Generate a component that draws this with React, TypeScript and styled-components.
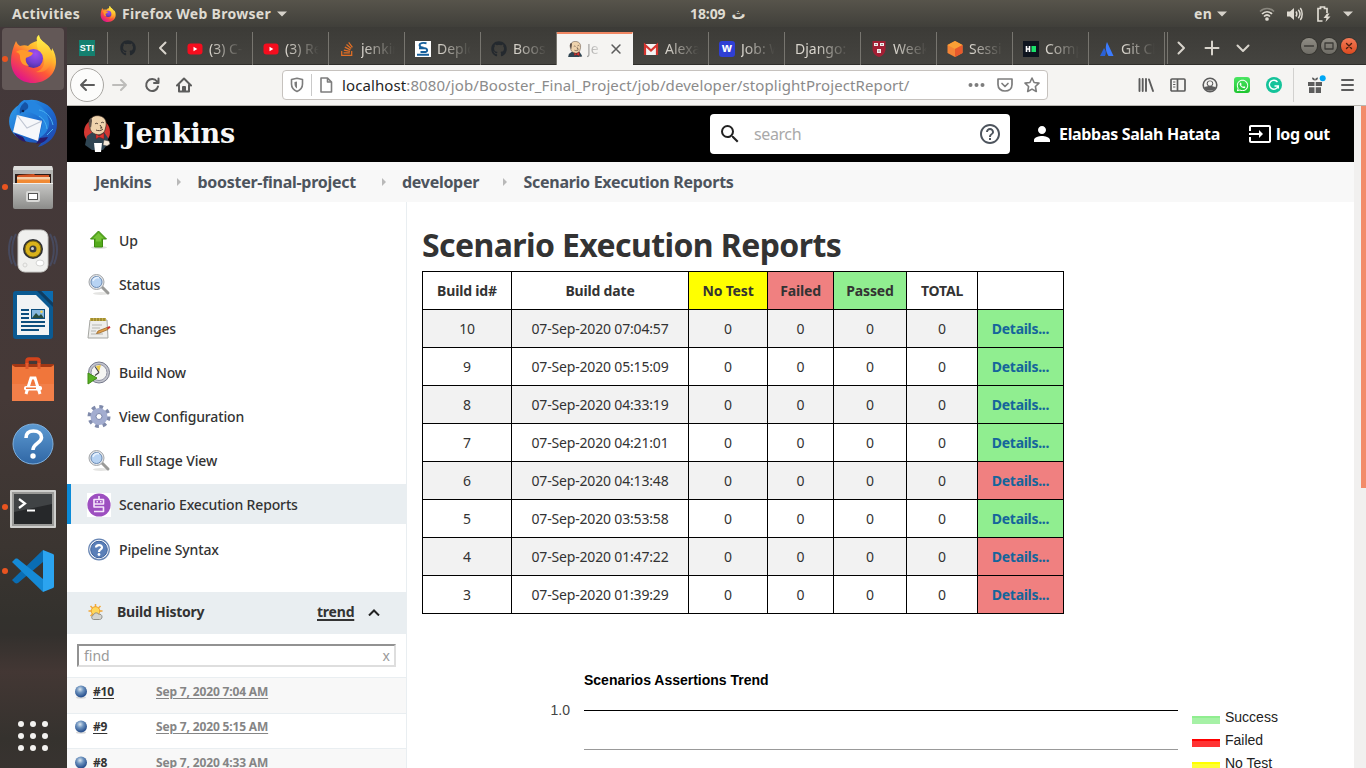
import React from 'react';
import styled, { createGlobalStyle, css } from 'styled-components';
import { FaGithub, FaStackOverflow, FaWhatsapp } from 'react-icons/fa';
import { MdSearch, MdHelpOutline, MdPerson, MdInput } from 'react-icons/md';

const sans = '"Noto Sans", "Open Sans", sans-serif';

const GlobalStyle = createGlobalStyle`
  * { box-sizing: border-box; }
  body { margin: 0; overflow: hidden; font-family: ${sans}; font-size: 14px; color: #333; }
  svg { display: block; flex: none; }
`;

/* ---------- desktop frame ---------- */
const Desktop = styled.div`
  display: flex; flex-direction: column; width: 1366px; height: 768px; overflow: hidden; background: #fff;
`;
const TopBar = styled.header`
  display: flex; align-items: center; flex: none; height: 27px; padding: 0 0 0 12px;
  background: linear-gradient(#57544b, #403f3a);
  color: #dfdbd2; font-weight: 700; font-size: 14px; letter-spacing: 0.3px; white-space: nowrap;
`;
const Activities = styled.span`width: 88px;`;
const AppMenu = styled.div`
  display: flex; align-items: center; width: 590px; gap: 6px;
`;
const Clock = styled.div`
  display: flex; width: 504px; gap: 6px; align-items: center; letter-spacing: -0.1px;
`;
const ClockDay = styled.span`font-family: "DejaVu Sans", sans-serif; font-size: 14px;`;
const Lang = styled.span`width: 23px;`;
const Tray = styled.div`display: flex; align-items: center; gap: 12px; margin-left: 32px;`;

const Body = styled.div`display: flex; flex: 1; min-height: 0;`;
const Dock = styled.nav`
  display: flex; flex-direction: column; flex: none; width: 67px;
  background: linear-gradient(#43383a 0, #453937 50%, #3b3531 70%, #33312d 80%, #33302d 82%, #433734 87%, #35322e 96%, #383330 100%);
`;
const DockItem = styled.div<{ $active?: boolean; $running?: boolean; $drop?: number }>`
  position: relative; display: flex; align-items: center; justify-content: center;
  height: 62px; margin: 1px 3px 1px 2px; padding-top: ${p => p.$drop ?? 0}px; border-radius: 4px;
  background: ${p => (p.$active ? '#635857' : 'transparent')};
  ${p => p.$running && css`
    &::before { content: ''; position: absolute; left: 0; top: 28px; width: 6px; height: 6px; border-radius: 50%; background: #e95420; }
  `}
`;
const AppGrid = styled.div`
  display: grid; grid-template-columns: repeat(3, 6px); gap: 6px; margin: auto 0 17px 18px;
`;
const Dot = styled.i`width: 6px; height: 6px; border-radius: 50%; background: #f3f2f0;`;

/* ---------- browser ---------- */
const Browser = styled.main`display: flex; flex-direction: column; width: 1299px;`;
const TabBar = styled.div`
  display: flex; flex: none; height: 38px; padding-top: 5px; border-bottom: 1px solid #2f2e2b;
  background: linear-gradient(#3c3b37, #454440); color: #d8d4cc;
`;
const tabEdge = css`border-right: 1px solid #77756f;`;
const PinnedTab = styled.div<{ $w: number }>`
  display: flex; align-items: center; justify-content: center; width: ${p => p.$w}px; ${tabEdge}
`;
const Tab = styled.div<{ $active?: boolean }>`
  display: flex; align-items: center; flex: none; gap: 6px; width: 76px; height: 33px; padding-left: 10px;
  ${tabEdge}
  ${p => p.$active && css`
    gap: 4px; background: #f5f4f2; color: #5c5c5c; border-top: 2px solid #f08763; border-right-color: #f5f4f2; padding-bottom: 2px;
  `}
`;
const TabTitle = styled.span<{ $w: number }>`
  width: ${p => p.$w}px; line-height: 20px; white-space: nowrap;
  mask-image: linear-gradient(90deg, #000 ${p => p.$w - 32}px, transparent ${p => p.$w}px);
`;
const TabTools = styled.div`
  display: flex; align-items: center; width: 98px; margin-left: 2px; padding-left: 5px; gap: 15px; border-left: 1px solid #77756f;
`;
const WindowButtons = styled.div`display: flex; gap: 4px; margin: 6px 0 0 36px;`;
const WindowButton = styled.div<{ $close?: boolean }>`
  display: flex; align-items: center; justify-content: center; width: 16px; height: 16px; border-radius: 50%;
  background: ${p => (p.$close ? 'linear-gradient(#f47b57, #dd4a1f)' : 'linear-gradient(#8f8c84, #6f6d66)')};
  box-shadow: 0 0 0 1px #35342f;
`;
const StBadge = styled.div`
  width: 16px; height: 16px; background: #14806f; color: #fff; font: 700 9px/16px "Liberation Sans", sans-serif; text-align: center;
`;
const WorkBadge = styled.div`
  width: 16px; height: 16px; border-radius: 3px; background: #2f3fd4; color: #fff; font: 700 12px/14px "Noto Sans", sans-serif; text-align: center;
`;

const Toolbar = styled.div`
  display: flex; align-items: center; flex: none; height: 41px; padding: 0 0 0 3px;
  background: #f5f4f2; border-bottom: 1px solid #b9b7b2; color: #5c5c5c;
`;
const BackButton = styled.div`
  display: flex; align-items: center; justify-content: center; width: 34px; height: 34px; margin-right: 8px;
  border: 1px solid #a8a6a2; border-radius: 50%; background: #fcfcfb;
`;
const NavSlot = styled.div<{ $ml?: number }>`display: flex; justify-content: center; width: 32px; margin-left: ${p => p.$ml ?? 0}px;`;
const AddressBar = styled.div`
  display: flex; align-items: center; width: 766px; height: 30px; margin-left: 82px; padding: 0 6px;
  border: 1px solid #c6c2be; border-radius: 4px; background: #fff; color: #7d7d7d;
`;
const AddressDivider = styled.i`width: 1px; height: 22px; margin: 0 6px 0 6px; background: #c9c9c9;`;
const Url = styled.div`
  flex: 1; margin-left: 8px; color: #8b8b8b; font-size: 15px; letter-spacing: 0.1px; line-height: 20px; white-space: nowrap;
`;
const Host = styled.span`color: #1f1f1f;`;
const AddressActions = styled.div`display: flex; align-items: center; gap: 11.500px; margin-right: 1px;`;
const ToolbarActions = styled.div`display: flex; align-items: center; gap: 16px; margin-left: 90px;`;
const ToolbarMenu = styled.div`
  display: flex; align-items: center; gap: 14px; height: 34px; margin-left: 11px; padding-left: 13px; border-left: 1px solid #d2d1cf;
`;
const WhatsApp = styled.div`
  display: flex; align-items: center; justify-content: center; width: 16px; height: 16px; border-radius: 3px;
  background: linear-gradient(#4be663, #1ec52f); color: #fff;
`;

/* ---------- jenkins page ---------- */
const Viewport = styled.div`display: flex; flex: 1; min-height: 0;`;
const Page = styled.div`display: flex; flex-direction: column; width: 1287px; background: #fff;`;
const ScrollTrack = styled.div`width: 12px; background: #f1f0ef;`;
const ScrollThumb = styled.div`width: 5px; height: 382px; margin-left: 7px; background: #f28c6a;`;

const JenkinsHeader = styled.div`
  display: flex; align-items: center; flex: none; height: 56px; padding: 0 0 0 16px; background: #000; color: #fff;
`;
const Wordmark = styled.span`
  flex: none; width: 587px; margin-left: 12px; padding-bottom: 1px; font: 700 27px/40px "DejaVu Serif", serif; letter-spacing: -0.2px; color: #f7f7f7;
`;
const SearchBox = styled.div`
  display: flex; align-items: center; flex: none; width: 300px; height: 40px; padding: 0 8px 0 8px; border-radius: 4px;
  background: #fff; color: #a9a9a9; font-size: 16px; letter-spacing: -0.4px;
`;
const SearchText = styled.span`flex: 1; margin-left: 12px; padding-bottom: 1px;`;
const HeaderLink = styled.div<{ $gap: number; $ml: number }>`
  display: flex; align-items: center; gap: ${p => p.$gap}px; margin-left: ${p => p.$ml}px;
  font-size: 16px; font-weight: 700; letter-spacing: -0.33px; white-space: nowrap;
`;
const Breadcrumbs = styled.div`
  display: flex; align-items: center; flex: none; height: 40px; padding: 0 0 1px 28px; background: #f8f8f8;
  color: #4d545d; font-weight: 700; font-size: 16px; letter-spacing: -0.28px;
`;
const Crumb = styled.span<{ $w: number }>`width: ${p => p.$w}px; white-space: nowrap;`;
const CrumbArrow = styled.i`
  margin: 0 16.500px 0 24px; border: 4px solid transparent; border-left-color: #b9b9b9; border-right: 0;
`;

const Columns = styled.div`display: flex; flex: 1; min-height: 0;`;
const SidePanel = styled.aside`
  width: 340px; padding-top: 18px; border-right: 1px solid #e9eef1; overflow: hidden;
`;
const Task = styled.div<{ $selected?: boolean; $gap?: number }>`
  display: flex; align-items: center; gap: 8px; height: 40px; margin-bottom: ${p => p.$gap ?? 4}px; padding: 2px 0 0 16px;
  border-left: 4px solid ${p => (p.$selected ? '#0b8bd8' : 'transparent')};
  background: ${p => (p.$selected ? '#e9eef1' : 'transparent')};
  font-weight: 500; letter-spacing: -0.14px; line-height: 20px;
`;
const HistoryHeader = styled.div`
  display: flex; align-items: center; height: 42px; padding: 0 0 3px 20px; background: #e9eef1;
  font-weight: 700; letter-spacing: -0.22px; line-height: 19px;
`;
const HistoryTitle = styled.span`width: 200px; margin-left: 12px;`;
const TrendLink = styled.a`
  width: 51px; text-decoration: underline; text-decoration-thickness: 2px; text-underline-offset: 2px;
`;
const FindBox = styled.div`
  display: flex; justify-content: space-between; align-items: center; width: 319px; height: 23px; margin: 10px 0 10px 10px; padding: 0 4px 1px 5px;
  border: 2px solid; border-color: #929292 #dedede #dedede #929292; color: #9a9a9a;
`;
const BuildList = styled.div``;
const BuildRow = styled.div<{ $h: number; $top: number }>`
  display: flex; align-items: flex-start; height: ${p => p.$h}px; padding: ${p => p.$top}px 0 0 7px; border-top: 1px solid #e9eef1;
  font-size: 12px; font-weight: 700; line-height: 17px; letter-spacing: -0.16px;
  &:nth-child(odd) { background: #f8f8f8; }
  svg { margin-top: 2px; }
`;
const BuildNumber = styled.a`width: 63px; margin-left: 5px; text-decoration: underline; text-underline-offset: 2px;`;
const BuildTime = styled.a`color: #858585; text-decoration: underline; text-underline-offset: 2px;`;

const Main = styled.section`padding: 24px 0 0 15px;`;
const Title = styled.h1`margin: 0 0 8px; font-size: 32px; line-height: 37px; font-weight: 700; letter-spacing: -0.6px;`;
const Table = styled.table`
  width: 642px; table-layout: fixed; border-spacing: 0; border: solid #000; border-width: 1px 0 0 1px; text-align: center;
`;
const fills: Record<string, string> = { yellow: '#ffff00', red: '#f08080', green: '#90ee90' };
const Cell = styled.td<{ $fill?: string }>`
  height: 38px; padding: 0; border: solid #000; border-width: 0 1px 1px 0; letter-spacing: -0.17px; line-height: 20px;
  ${p => p.$fill && css`background: ${fills[p.$fill]};`}
`;
const HeadCell = styled(Cell)`font-weight: 700;`;
const Col = styled.col<{ $w: number }>`width: ${p => p.$w}px;`;
const BuildTr = styled.tr`&:nth-child(odd) { background: #f2f2f2; }`;
const DetailsLink = styled.a`color: #15659b; font-weight: 700; letter-spacing: -0.3px;`;

const Chart = styled.div`
  display: grid; grid-template-columns: 148px 594px 1fr; column-gap: 14px; margin-top: 57px;
  font-family: "Liberation Sans", sans-serif;
`;
const ChartTitle = styled.div`grid-column: 2 / 4; height: 30px; font-weight: 700; line-height: 18px; color: #000;`;
const AxisLabel = styled.div`text-align: right; line-height: 18px; color: #444;`;
const Plot = styled.div`
  height: 40px; margin-top: 9px; border-top: 1px solid #000; border-bottom: 1px solid #999;
`;
const Legend = styled.div`display: flex; flex-direction: column; gap: 5px; padding-top: 7px; color: #222;`;
const LegendItem = styled.div`display: flex; align-items: center; gap: 5px; height: 18px;`;
const Swatch = styled.i<{ $line: string; $area: string }>`
  width: 28px; height: 8px; margin-top: 6px; border-top: 2px solid ${p => p.$line}; background: ${p => p.$area};
`;

/* ---------- drawings ---------- */
const FirefoxIcon = ({ size }: { size: number }) => (
  <svg width={size} height={size} viewBox="0 0 48 48">
    <defs>
      <linearGradient id="ffBody" x1="0.8" y1="0.1" x2="0.25" y2="0.95">
        <stop offset="0" stopColor="#fff24a" /><stop offset="0.3" stopColor="#ffb52c" /><stop offset="0.6" stopColor="#ff5a36" /><stop offset="1" stopColor="#e0158a" />
      </linearGradient>
      <radialGradient id="ffGlobe" cx="0.6" cy="0.25" r="0.8">
        <stop offset="0" stopColor="#a04df0" /><stop offset="0.6" stopColor="#7440d0" /><stop offset="1" stopColor="#4a2fa0" />
      </radialGradient>
      <linearGradient id="ffTail" x1="0" y1="0" x2="0" y2="1">
        <stop offset="0" stopColor="#fff44f" /><stop offset="0.6" stopColor="#ffc02e" /><stop offset="1" stopColor="#ff7a30" />
      </linearGradient>
    </defs>
    <path d="M7 6c1 2 2 4 4 5 3-1 6-1 8 0 3-3 6-4 9-5-1-3 0-5 2-6 0 5 7 8 10 12 1 2 2 3 2 4 1-1 1-2 1-3 3 5 4 9 4 14 0 12-10 21-23 21S2 39 2 26c0-7 2-14 5-20z" fill="url(#ffBody)" />
    <path d="M30 0c0 5 7 8 10 12 5 7 4 15 0 20-4 5-9 6-13 5 7-2 9-8 8-13-2-6-7-8-7-14 0-4 0-8 2-10z" fill="url(#ffTail)" />
    <circle cx="24.500" cy="23.500" r="9.500" fill="url(#ffGlobe)" />
    <path d="M7 17c4-3 8-2 11-1 2 1 5 1 6 2-1 3-5 4-7 5-1 3 1 6 3 8-6 0-9-4-9-9 0-3-1-4-4-5z" fill="#ff9a2b" />
  </svg>
);

const ThunderbirdIcon = () => (
  <svg width="48" height="48" viewBox="0 0 48 48">
    <defs><linearGradient id="tb" x1="0" y1="0" x2="1" y2="1"><stop offset="0" stopColor="#35a4ec" /><stop offset="0.5" stopColor="#1d6fd2" /><stop offset="1" stopColor="#1f3fa8" /></linearGradient></defs>
    <path d="M14 4c3-4 12-4 18-1 10 3 16 12 16 22 0 12-8 20-19 23l4-5c-8 2-22 0-29-9C-2 26-1 15 6 9c2-2 5-4 8-5z" fill="url(#tb)" />
    <path d="M5 34c3 5 7 8 12 9l-3-5zM27 45c7-1 10-3 12-7l-8 1z" fill="#2a1a6b" />
    <path d="M8 16l25 6-4 20L4 33z" fill="#f6f7fa" />
    <path d="M8 16l10 13 15-7" fill="none" stroke="#c0c6d2" strokeWidth="1.200" />
    <path d="M15 1C8 5 7 11 8 16c3-3 6-4 9-3 6 0 11 3 17 8l-4 18c8-4 12-12 9-20C36 8 26 1 15 1z" fill="#2585e0" />
    <path d="M16 3c-4 3-6 7-5 12 2-3 6-3 8-6 1-3-1-5-3-6z" fill="#1553a5" />
    <circle cx="14" cy="12" r="1.300" fill="#0a2350" />
    <path d="M30 11c6 1 12 6 14 15M30 17c5 3 7 7 8 13M38 36l6-6" stroke="#49b0f0" strokeWidth="1" fill="none" />
  </svg>
);

const FilesIcon = () => (
  <svg width="44" height="44" viewBox="0 0 44 44">
    <defs><linearGradient id="cab" x1="0" y1="0" x2="0" y2="1"><stop offset="0" stopColor="#c8c8c6" /><stop offset="1" stopColor="#8c8c8a" /></linearGradient></defs>
    <path d="M3 1h38l1 3v38H2V4z" fill="#b4b4b2" /><path d="M3 1h38l1 4H2z" fill="#dededc" />
    <path d="M4 9h36v10H4z" fill="#2b1d1a" /><path d="M8 10l15-1 1 1h14v8H6v-7z" fill="#d35422" />
    <path d="M6 12h33v3H6z" fill="#f4cda8" /><path d="M6 14.500h33V19H6z" fill="#f08a34" />
    <path d="M2 18h40v24a2 2 0 0 1-2 2H4a2 2 0 0 1-2-2z" fill="url(#cab)" /><path d="M2 18h40v1H2z" fill="#efefed" />
    <rect x="15" y="26" width="14" height="11" rx="2" fill="#d9d9d7" /><rect x="17.500" y="28.500" width="9" height="6" fill="#fff" stroke="#555" />
  </svg>
);

const SpeakerIcon = () => (
  <svg width="50" height="46" viewBox="0 0 50 46">
    <g fill="none" stroke="#4d6ba3" strokeWidth="2" opacity="0.35"><path d="M8 6c-5 9-5 23 0 32M42 6c5 9 5 23 0 32M4 8c-4 8-4 19 0 28M46 8c4 8 4 19 0 28" /></g>
    <rect x="10" y="2" width="30" height="42" rx="7" fill="#f0f0ee" stroke="#c9c9c6" />
    <circle cx="25" cy="21" r="10" fill="#2f3033" /><circle cx="25" cy="21" r="8" fill="#d9b21c" stroke="#806a10" />
    <circle cx="25" cy="21" r="3.500" fill="#3a3b3d" /><circle cx="24.500" cy="20.500" r="1.500" fill="#d0d4da" />
    <ellipse cx="32" cy="35" rx="4" ry="3" fill="#fff" stroke="#d4d4d2" /><circle cx="17" cy="37" r="2" fill="none" stroke="#d4d4d2" />
  </svg>
);

const WriterIcon = () => (
  <svg width="40" height="48" viewBox="0 0 40 48">
    <path d="M3 0h24l13 13v32a3 3 0 0 1-3 3H3a3 3 0 0 1-3-3V3a3 3 0 0 1 3-3z" fill="#0b5a92" />
    <path d="M4 4h19l13 13v27H4z" fill="#f1f3f4" /><path d="M28 0h12v12z" fill="#0c6cb0" /><path d="M24 0h4l12 12v4z" fill="#0d3d63" />
    <g fill="#0d4e7d"><path d="M8 18h8v2H8zM8 22h8v2H8zM8 26h8v2H8zM8 30h24v2H8zM8 34h24v2H8zM8 38h18v2H8z" /><path d="M18 18h14v10H18z" /></g>
    <path d="M19 19h12v8H19z" fill="#87b8de" /><path d="M19 27l4-5 3 3 2-2 3 4z" fill="#284c3c" /><circle cx="28.500" cy="20.800" r="1.200" fill="#f7d24a" />
  </svg>
);

const SoftwareIcon = () => (
  <svg width="42" height="46" viewBox="0 0 42 46">
    <path d="M15 15V5a2 2 0 0 1 2-2h8a2 2 0 0 1 2 2v10" fill="none" stroke="#d3431b" strokeWidth="3.500" />
    <path d="M0 8h42l-1 5H1z" fill="#a13715" /><path d="M0 9l3 2h36l3-2v36H0z" fill="#f0763b" /><path d="M0 45V28h42v17z" fill="#f28350" opacity="0.7" />
    <path d="M15 13V7M27 13V7" stroke="#e2592d" strokeWidth="3" />
    <path d="M14 38l5-16h4l5 16" fill="none" stroke="#fff" strokeWidth="3" /><rect x="12" y="30" width="18" height="4.500" rx="2" fill="#fff" /><path d="M14 31.500h10v1.500H14z" fill="#f0763b" />
  </svg>
);

const HelpDockIcon = () => (
  <svg width="42" height="42" viewBox="0 0 42 42">
    <defs><linearGradient id="hp" x1="0" y1="0" x2="0" y2="1"><stop offset="0" stopColor="#5d9ad2" /><stop offset="1" stopColor="#3067a5" /></linearGradient></defs>
    <circle cx="21" cy="21" r="20" fill="url(#hp)" stroke="#7fb0dd" />
    <path d="M14 15c0-5 3-7 7.500-7 5 0 8 3 8 6.500C29.500 20 21 20.500 21 27" fill="none" stroke="#fff" strokeWidth="3.600" /><circle cx="21" cy="33" r="2.700" fill="#fff" />
  </svg>
);

const TerminalIcon = () => (
  <svg width="46" height="38" viewBox="0 0 46 38">
    <rect width="46" height="38" rx="1" fill="#cfcfcd" /><rect x="2" y="2" width="42" height="34" fill="#9a9a98" />
    <rect x="4" y="4" width="38" height="30" fill="#26282a" /><path d="M4 4h38v10L4 22z" fill="#404345" />
    <path d="M9 9l6 4.500L9 18M17 20.500h8" fill="none" stroke="#fff" strokeWidth="2.200" />
  </svg>
);

const CodeIcon = () => (
  <svg width="42" height="42" viewBox="0 0 42 42">
    <path d="M0 30l3 3c1 .6 2 .6 3 0l25-21V0z" fill="#0a6db3" /><path d="M0 12l3-3c1-.6 2-.6 3 0l25 20v13z" fill="#158ad6" />
    <path d="M31 0l10 4c.7.300 1 1 1 2v30c0 1-.3 1.700-1 2l-10 4z" fill="#2ba4f0" />
  </svg>
);

const Butler = ({ w, h, box = '0 0 28 38', ring }: { w: number; h: number; box?: string; ring?: boolean }) => (
  <svg width={w} height={h} viewBox={box}>
    {ring && <circle cx="14" cy="17" r="13" fill="#d33833" />}
    <path d="M4 21l7-5 10 1 4 6-1 7-4 5H9L2 30z" fill="#2f4553" />
    <path d="M7 5c2-4 6-5 10-4 4 1 7 4 6 10l-1 4c-1 4-7 6-10 4-3-1-5-4-5-6-1-3-1-5 0-8z" fill="#efd3ad" stroke="#3c2c24" strokeWidth="0.700" />
    <path d="M6 5c2-3 3-2 3 1l-1 7c-2-2-3-5-2-8z" fill="#5d5049" />
    <path d="M12 9c1-1 2-1 3 0M18 8c1-1 2-1 3 0M13 15c2 1 5 1 7-1M17 10l2 3h-2" fill="none" stroke="#3c2c24" strokeWidth="0.900" />
    <path d="M13 19l3 2 5-3v6l-5-2-3 2z" fill="#e03733" stroke="#7e1715" strokeWidth="0.500" />
    <path d="M11 28h8l-1 9h-6z" fill="#fff" /><path d="M21 25l5 1 1 3-3 2-4-1z" fill="#f5e9d9" stroke="#444" strokeWidth="0.500" />
  </svg>
);

const Caret = () => <svg width="10" height="6" viewBox="0 0 10 6"><path d="M0 .5h10L5 5.500z" fill="#d6d2ca" /></svg>;

const YouTube = () => (
  <svg width="16" height="16" viewBox="0 0 16 16"><rect x="0.500" y="2.500" width="15" height="11" rx="3" fill="#f50d1e" /><path d="M6.500 5.800v4.400L10.300 8z" fill="#fff" /></svg>
);
const DeployIcon = () => (
  <svg width="16" height="16" viewBox="0 0 16 16"><path fill="#fff" d="M0 0h16v16H0z" /><path d="M11.500 2.200C8 1.500 4.500 2 4.500 4s2 2.500 4 2.800M4 7.200h6c2.500 0 3 3.300.5 3.800H5.500M2 13.800h12" fill="none" stroke="#17609c" strokeWidth="1.900" /></svg>
);
const GmailIcon = () => (
  <svg width="16" height="16" viewBox="0 0 16 16"><path d="M1 3h14v11H1z" fill="#f3f3f3" /><path d="M2 14V4l6 5.500L14 4v10" fill="none" stroke="#d5342f" strokeWidth="2.200" /></svg>
);
const ShieldIcon = () => (
  <svg width="16" height="16" viewBox="0 0 16 16"><path d="M1.500 0h13v8c0 4-3 7-6.500 8-3.500-1-6.500-4-6.500-8z" fill="#a31f34" /><path d="M3 2h4v3H3zM9 2h4v3H9zM6 8h4v4H6z" fill="#f4e9ea" /><path d="M4 3.500h2M10 3.500h2M7 10h2" stroke="#777" strokeWidth="0.800" /></svg>
);
const CubeIcon = () => (
  <svg width="16" height="16" viewBox="0 0 16 16"><path d="M8 0l7.500 4v8L8 16 .5 12V4z" fill="#f58536" /><path d="M8 0l7.500 4L8 8 .5 4z" fill="#fba035" /><path d="M15.500 4v8L8 16V8z" fill="#e9592c" /></svg>
);
const HackerIcon = () => (
  <svg width="16" height="16" viewBox="0 0 16 16"><path fill="#0e141e" d="M0 0h16v16H0z" /><path d="M3.500 5v6M6.500 5v6M3.500 8h3" stroke="#fff" strokeWidth="1.600" /><path d="M8.500 5H13v6H8.500z" fill="#1be26a" /></svg>
);
const AtlassianIcon = () => (
  <svg width="16" height="16" viewBox="0 0 16 16"><path d="M5 7c2 2 2.500 5 1 8H1z" fill="#2a61d8" /><path d="M8 1l6.500 14H9.500C6.500 10 6 6 8 1z" fill="#3b7bff" /></svg>
);

/* line icons share one stroke style */
const Line = ({ d, w = 16, sw = 2, color = 'currentColor', children }: { d: string; w?: number; sw?: number; color?: string; children?: React.ReactNode }) => (
  <svg width={w} height={w} viewBox="0 0 16 16" fill="none" stroke={color} strokeWidth={sw} strokeLinecap="round" strokeLinejoin="round"><path d={d} />{children}</svg>
);

const Magnifier = () => (
  <svg width="24" height="24" viewBox="0 0 24 24"><ellipse cx="14" cy="20.500" rx="8" ry="1.500" fill="#e4e4e2" /><path d="M15 14l6 6" stroke="#9a9a98" strokeWidth="3" strokeLinecap="round" /><circle cx="9.500" cy="9" r="7.500" fill="#e3e5e8" stroke="#a3a6aa" /><circle cx="9.500" cy="9" r="5.500" fill="#b7d3f3" stroke="#6d8db5" /><path d="M6 8c1-3 4-4 6-3" stroke="#e7f2ff" fill="none" strokeWidth="1.500" /></svg>
);
const UpIcon = () => (
  <svg width="24" height="24" viewBox="0 0 24 24"><ellipse cx="12" cy="18.500" rx="8" ry="1.500" fill="#dededc" /><path d="M11.500 2l8 8h-4v8h-8v-8h-4z" fill="#55ab1c" stroke="#3d8b10" /><path d="M11.500 4l5.500 5.500h-3v3H9v-3H6z" fill="#84cc44" opacity="0.7" /></svg>
);
const NotepadIcon = () => (
  <svg width="24" height="24" viewBox="0 0 24 24"><path d="M3 3h17l1 18H1z" fill="#eeeeec" stroke="#a5a6a2" /><path d="M3 1h16v3H3z" fill="#c6b04c" /><path d="M5 1v3M8 1v3M11 1v3M14 1v3M17 1v3" stroke="#7d6c1d" /><path d="M5 8h10M5 11h8M4 14h5M4 17h12" stroke="#b5b6b2" /><path d="M9.500 16.500l1.500-2.500 9-3.500 1 2L12.500 16z" fill="#e2a14c" stroke="#8f5b1d" strokeWidth="0.700" /><path d="M20 10.300L22.500 9l1 1.800-2.500 1.400z" fill="#cc2e2e" /></svg>
);
const ClockIcon = () => (
  <svg width="24" height="24" viewBox="0 0 24 24"><circle cx="12" cy="11.500" r="10.500" fill="#c3c5cd" stroke="#777a8c" /><circle cx="12" cy="11.500" r="8" fill="#f5f5f3" stroke="#8e90a2" /><path d="M12 11L9 5l5-1z" fill="#eccb4a" /><path d="M12 11.500l-4-6M12 11.500l-4 3" stroke="#444" strokeWidth="1.200" /><path d="M1 12l9 5-9 6z" fill="#58b124" stroke="#3e8a12" /></svg>
);
const GearIcon = () => (
  <svg width="24" height="24" viewBox="0 0 24 24"><circle cx="12" cy="11.500" r="9" fill="none" stroke="#7f8aab" strokeWidth="5" strokeDasharray="3.500 3.570" /><circle cx="12" cy="11.500" r="5.800" fill="none" stroke="#a3add0" strokeWidth="5.500" /><circle cx="12" cy="11.500" r="3" fill="#fff" stroke="#7682a8" /></svg>
);
const StoplightIcon = () => (
  <svg width="24" height="24" viewBox="0 0 24 24"><path fill="#fff" d="M0 0h24v24H0z" /><circle cx="12" cy="12" r="11.600" fill="#9d4fc0" /><path d="M12 3v3M7 6.500h9.500V11H7zM7 11v3h9.500v4.500H7" fill="none" stroke="#f6e6fc" strokeWidth="1.600" strokeLinejoin="round" /><path d="M9.500 8.800h1.500M13 8.800h1.500" stroke="#f6e6fc" strokeWidth="1.500" /></svg>
);
const HelpIcon = () => (
  <svg width="24" height="24" viewBox="0 0 24 24"><circle cx="12" cy="11.500" r="10.300" fill="#fff" stroke="#6684b3" strokeWidth="1.200" /><circle cx="12" cy="11.500" r="8.300" fill="#5a7fb8" stroke="#3a5f9c" /><path d="M9 9.500c0-3 6-3.500 6 0 0 2-3 2-3 4.500" fill="none" stroke="#fff" strokeWidth="2.200" /><circle cx="12" cy="16.500" r="1.400" fill="#fff" /></svg>
);
const WeatherIcon = () => (
  <svg width="18" height="18" viewBox="0 0 18 18"><path d="M8.500 1v14M1.500 8h14M3.500 3l10 10M13.500 3l-10 10" stroke="#f2a838" strokeWidth="1.500" /><circle cx="8.500" cy="8" r="4.300" fill="#ffd75a" stroke="#ee9f2c" /><path d="M6.500 16.500a2.300 2.300 0 0 1 0-4.500c.5-2.500 4-2.800 5-.8 2-.4 3.500.8 3.500 2.600 0 1.700-1 2.700-2.500 2.700z" fill="#d4d4d0" stroke="#8f8f8b" /></svg>
);
const BallIcon = () => (
  <svg width="14" height="14" viewBox="0 0 14 14"><defs><radialGradient id="ball" cx="0.420" cy="0.320" r="0.620"><stop offset="0" stopColor="#dbe6ee" /><stop offset="0.450" stopColor="#6f94bf" /><stop offset="1" stopColor="#2b5390" /></radialGradient></defs><ellipse cx="7" cy="12.500" rx="5" ry="1.200" fill="#d8d8d8" /><circle cx="7" cy="6.500" r="6" fill="url(#ball)" /></svg>
);

/* ---------- data ---------- */
const tabs: { icon?: React.ReactNode; title: string; active?: boolean }[] = [
  { icon: <YouTube />, title: '(3) C-' },
  { icon: <YouTube />, title: '(3) Re' },
  { icon: <FaStackOverflow size={16} color="#e36f25" />, title: 'jenkin' },
  { icon: <DeployIcon />, title: 'Deplo' },
  { icon: <FaGithub size={16} color="#24292e" />, title: 'Boos' },
  { icon: <Butler w={16} h={16} box="1 0 26 26" />, title: 'Je', active: true },
  { icon: <GmailIcon />, title: 'Alexa' },
  { icon: <WorkBadge>w</WorkBadge>, title: 'Job: W' },
  { title: 'Django: H' },
  { icon: <ShieldIcon />, title: 'Week' },
  { icon: <CubeIcon />, title: 'Sessi' },
  { icon: <HackerIcon />, title: 'Comp' },
  { icon: <AtlassianIcon />, title: 'Git Cl' },
];

const tasks: { icon: React.ReactNode; label: string; selected?: boolean; gap?: number }[] = [
  { icon: <UpIcon />, label: 'Up' },
  { icon: <Magnifier />, label: 'Status' },
  { icon: <NotepadIcon />, label: 'Changes' },
  { icon: <ClockIcon />, label: 'Build Now' },
  { icon: <GearIcon />, label: 'View Configuration' },
  { icon: <Magnifier />, label: 'Full Stage View' },
  { icon: <StoplightIcon />, label: 'Scenario Execution Reports', selected: true, gap: 5 },
  { icon: <HelpIcon />, label: 'Pipeline Syntax', gap: 23 },
];

const builds = [
  { id: '#10', time: 'Sep 7, 2020 7:04 AM', h: 36, top: 5 },
  { id: '#9', time: 'Sep 7, 2020 5:15 AM', h: 35, top: 4 },
  { id: '#8', time: 'Sep 7, 2020 4:33 AM', h: 36, top: 5 },
];

const columns: { label: string; w: number; fill?: string }[] = [
  { label: 'Build id#', w: 89 }, { label: 'Build date', w: 177 }, { label: 'No Test', w: 79, fill: 'yellow' },
  { label: 'Failed', w: 66, fill: 'red' }, { label: 'Passed', w: 73, fill: 'green' }, { label: 'TOTAL', w: 71 }, { label: '', w: 86 },
];

const reports: [string, string, string][] = [
  ['10', '07-Sep-2020 07:04:57', 'green'], ['9', '07-Sep-2020 05:15:09', 'green'], ['8', '07-Sep-2020 04:33:19', 'green'],
  ['7', '07-Sep-2020 04:21:01', 'green'], ['6', '07-Sep-2020 04:13:48', 'red'], ['5', '07-Sep-2020 03:53:58', 'green'],
  ['4', '07-Sep-2020 01:47:22', 'red'], ['3', '07-Sep-2020 01:39:29', 'red'],
];

const legend = [
  { label: 'Success', line: '#90ee90', area: '#a6f1a6' },
  { label: 'Failed', line: '#ff0000', area: '#ff3333' },
  { label: 'No Test', line: '#ffff00', area: '#ffff33' },
];

/* ---------- sections ---------- */
const SystemBar = () => (
  <TopBar>
    <Activities>Activities</Activities>
    <AppMenu><FirefoxIcon size={16} />Firefox Web Browser<Caret /></AppMenu>
    <Clock><span>18:09</span><ClockDay>ث</ClockDay></Clock>
    <Lang>en</Lang><Caret />
    <Tray>
      <svg width="16" height="14" viewBox="0 0 16 14" fill="none" stroke="#dfdbd2" strokeWidth="1.700"><path d="M1 4.500c4-4 10-4 14 0" opacity="0.400" /><path d="M3 7c3-3 7-3 10 0M5 9.500c2-2 4-2 6 0" /><circle cx="8" cy="12" r="1" fill="#dfdbd2" /></svg>
      <svg width="16" height="14" viewBox="0 0 16 14" fill="none" stroke="#dfdbd2" strokeWidth="1.500"><path d="M0 4.500h3L7 1v12L3 9.500H0z" fill="#dfdbd2" stroke="none" /><path d="M9 4.500c1 1.500 1 3.500 0 5M11.300 2.800c2 2.500 2 6 0 8.400M13.300 1c2.500 3 2.500 9 0 12" /></svg>
      <svg width="16" height="16" viewBox="0 0 16 16" fill="none" stroke="#dfdbd2" strokeWidth="1.700"><path d="M7.500 15H3V2.500h2.500V1h4v1.500H12V7" /><path d="M12 7.500l-3.500 4.500h3l-1 4 5-5.500h-3L14.500 7.500z" fill="#dfdbd2" stroke="none" /></svg>
      <Caret />
    </Tray>
  </TopBar>
);

const Launcher = () => (
  <Dock>
    <DockItem $active $running><FirefoxIcon size={48} /></DockItem>
    <DockItem><ThunderbirdIcon /></DockItem>
    <DockItem $running><FilesIcon /></DockItem>
    <DockItem><SpeakerIcon /></DockItem>
    <DockItem><WriterIcon /></DockItem>
    <DockItem><SoftwareIcon /></DockItem>
    <DockItem $drop={1}><HelpDockIcon /></DockItem>
    <DockItem $running $drop={4}><TerminalIcon /></DockItem>
    <DockItem $running><CodeIcon /></DockItem>
    <AppGrid>{Array.from({ length: 9 }, (_, i) => <Dot key={i} />)}</AppGrid>
  </Dock>
);

const Tabs = () => (
  <TabBar>
    <PinnedTab $w={41}><StBadge>ST!</StBadge></PinnedTab>
    <PinnedTab $w={41}><FaGithub size={16} color="#24292e" /></PinnedTab>
    <PinnedTab $w={28}><Line d="M10.500 2.500L5 8l5.500 5.500" /></PinnedTab>
    {tabs.map((t, i) => (
      <Tab key={i} $active={t.active}>
        {t.icon}
        <TabTitle $w={t.active ? 18 : t.icon ? 34 : 54}>{t.title}</TabTitle>
        {t.active && <Line d="M3.500 3.500l9 9M12.500 3.500l-9 9" sw={1.800} w={14} />}
      </Tab>
    ))}
    <TabTools>
      <Line d="M5.500 2.500L11 8l-5.500 5.500" />
      <Line d="M8 1.500v13M1.500 8h13" />
      <Line d="M2.500 5.500L8 11l5.500-5.500" />
    </TabTools>
    <WindowButtons>
      <WindowButton><Line d="M3.500 8h9" sw={1.300} color="#3c3b37" /></WindowButton>
      <WindowButton><Line d="M4 5h8v6H4z" sw={1.300} color="#3c3b37" /></WindowButton>
      <WindowButton $close><Line d="M5.500 5.500l5 5M10.500 5.500l-5 5" sw={1.400} color="#4a1f10" /></WindowButton>
    </WindowButtons>
  </TabBar>
);

const NavBar = () => (
  <Toolbar>
    <BackButton><Line d="M15 8H2M7 3L2 8l5 5" /></BackButton>
    <Line d="M1 8h13M9 3l5 5-5 5" color="#bdbcba" />
    <NavSlot $ml={8}><Line d="M13 4.500A6 6 0 1 0 14 9.500M14.500 1.500v4.500H10" /></NavSlot>
    <NavSlot><Line d="M1 8.500L8 1.500l7 7M3 8v6.500h10V8M7 14v-4h2v4" /></NavSlot>
    <AddressBar>
      <Line d="M2.500 2.500L8 1.200l5.500 1.300v4.500c0 3.500-2 6-5.500 7.500-3.500-1.500-5.500-4-5.500-7.500z" sw={1.600}><path d="M8 4.500v7c-1.500-1-2.500-2.500-2.500-4.500V5z" fill="currentColor" stroke="none" /></Line>
      <AddressDivider />
      <Line d="M3 1h6.500l4 4v10H3zM9.500 1.500V5h4" sw={1.600} />
      <Url><Host>localhost</Host>:8080/job/Booster_Final_Project/job/developer/stoplightProjectReport/</Url>
      <AddressActions>
        <svg width="17" height="4" viewBox="0 0 17 4" fill="currentColor"><circle cx="2.500" cy="2" r="2" /><circle cx="8.500" cy="2" r="2" /><circle cx="14.500" cy="2" r="2" /></svg>
        <Line d="M1 2h14v5.500c0 4-3 6.500-7 6.500s-7-2.500-7-6.500zM5 6.500l3 3 3-3" sw={1.700} />
        <Line d="M8 1l2.100 4.500 4.900.6-3.600 3.400.9 5L8 12.100l-4.300 2.400.9-5L1 6.100l4.900-.6z" sw={1.600} />
      </AddressActions>
    </AddressBar>
    <ToolbarActions>
      <Line d="M1.500 2v12M4.700 2v12M8 2v12M11 2.500L15 14" sw={1.900} />
      <Line d="M2 2h12a1 1 0 0 1 1 1v10a1 1 0 0 1-1 1H2a1 1 0 0 1-1-1V3a1 1 0 0 1 1-1zM7.500 2v12" sw={1.700}><path d="M3.500 5h1.500M3.500 7.500h1.500M3.500 10h1.500" strokeWidth="1" /></Line>
      <svg width="16" height="16" viewBox="0 0 16 16"><circle cx="8" cy="8" r="6.800" fill="none" stroke="#5c5c5c" strokeWidth="1.600" /><path d="M2 11c1-2 3-1 4-2-2-1-2-5.500 2-5.500s4 4.500 2 5.500c1 1 3 0 4 2-1.500 3-10 4-12 0z" fill="#5c5c5c" /><circle cx="8" cy="6.500" r="2.200" fill="#f5f4f2" /></svg>
      <WhatsApp><FaWhatsapp size={13} /></WhatsApp>
      <svg width="16" height="16" viewBox="0 0 16 16"><circle cx="8" cy="8" r="8" fill="#15c39a" /><path d="M11.500 5A4.500 4.500 0 1 0 12.200 9H8.500M12.300 9v2.500" fill="none" stroke="#fff" strokeWidth="1.400" /></svg>
    </ToolbarActions>
    <ToolbarMenu>
      <svg width="20" height="20" viewBox="0 0 20 20" fill="#5c5c5c"><path d="M1 7h6.500v4H1zM8.700 7H15v4H8.700zM2 12.200h5.500V18H2zM8.700 12.200H14V18H8.700zM5 2.500c2 0 3 1 3 3-2 0-3-1-3-3zM11 2.500c-2 0-3 1-3 3 2 0 3-1 3-3z" /><circle cx="15.700" cy="3.200" r="3" fill="#00a7f5" /></svg>
      <Line d="M1 3h11M1 8h11M1 13h11" w={16} />
    </ToolbarMenu>
  </Toolbar>
);

const ArrowUp = () => <svg width="12" height="8" viewBox="0 0 12 8"><path d="M1 7.500l5-5 5 5" fill="none" stroke="#222" strokeWidth="2" /></svg>;

const Sidebar = () => (
  <SidePanel>
    {tasks.map(t => <Task key={t.label} $selected={t.selected} $gap={t.gap}>{t.icon}{t.label}</Task>)}
    <HistoryHeader><WeatherIcon /><HistoryTitle>Build History</HistoryTitle><TrendLink>trend</TrendLink><ArrowUp /></HistoryHeader>
    <FindBox><span>find</span><span>x</span></FindBox>
    <BuildList>
      {builds.map(b => <BuildRow key={b.id} $h={b.h} $top={b.top}><BallIcon /><BuildNumber>{b.id}</BuildNumber><BuildTime>{b.time}</BuildTime></BuildRow>)}
    </BuildList>
  </SidePanel>
);

const Report = () => (
  <Main>
    <Title>Scenario Execution Reports</Title>
    <Table>
      <colgroup>{columns.map((c, i) => <Col key={i} $w={c.w} />)}</colgroup>
      <thead><tr>{columns.map((c, i) => <HeadCell as="th" key={i} $fill={c.fill}>{c.label}</HeadCell>)}</tr></thead>
      <tbody>
        {reports.map(([id, date, fill]) => (
          <BuildTr key={id}>
            <Cell>{id}</Cell><Cell>{date}</Cell><Cell>0</Cell><Cell>0</Cell><Cell>0</Cell><Cell>0</Cell>
            <Cell $fill={fill}><DetailsLink>Details...</DetailsLink></Cell>
          </BuildTr>
        ))}
      </tbody>
    </Table>
    <Chart>
      <ChartTitle>Scenarios Assertions Trend</ChartTitle>
      <AxisLabel>1.0</AxisLabel>
      <Plot />
      <Legend>{legend.map(l => <LegendItem key={l.label}><Swatch $line={l.line} $area={l.area} />{l.label}</LegendItem>)}</Legend>
    </Chart>
  </Main>
);

export default function App() {
  return (
    <Desktop>
      <GlobalStyle />
      <SystemBar />
      <Body>
        <Launcher />
        <Browser>
          <Tabs />
          <NavBar />
          <Viewport>
            <Page>
              <JenkinsHeader>
                <Butler w={28} h={38} ring />
                <Wordmark>Jenkins</Wordmark>
                <SearchBox><MdSearch size={24} color="#222" /><SearchText>search</SearchText><MdHelpOutline size={24} color="#4d545d" /></SearchBox>
                <HeaderLink $gap={5} $ml={20}><MdPerson size={24} />Elabbas Salah Hatata</HeaderLink>
                <HeaderLink $gap={4} $ml={28}><MdInput size={24} />log out</HeaderLink>
              </JenkinsHeader>
              <Breadcrumbs>
                <Crumb $w={58}>Jenkins</Crumb><CrumbArrow />
                <Crumb $w={160}>booster-final-project</Crumb><CrumbArrow />
                <Crumb $w={77}>developer</Crumb><CrumbArrow />
                <Crumb $w={212}>Scenario Execution Reports</Crumb>
              </Breadcrumbs>
              <Columns><Sidebar /><Report /></Columns>
            </Page>
            <ScrollTrack><ScrollThumb /></ScrollTrack>
          </Viewport>
        </Browser>
      </Body>
    </Desktop>
  );
}
